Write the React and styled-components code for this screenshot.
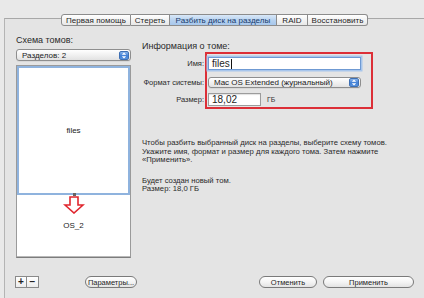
import React from "react";
import styled, { createGlobalStyle } from "styled-components";

const Global = createGlobalStyle`
  html, body { margin: 0; padding: 0; background: #e9e9e9; }
  body { font-family: "Liberation Sans", "DejaVu Sans", sans-serif; color: #2a2a2a; }
  * { box-sizing: border-box; }
`;

const Page = styled.div`
  width: 424px;
  height: 298px;
  overflow: hidden;
  padding: 18px 0 0 4px;
  background: #e9e9e9;
`;

const Group = styled.div`
  width: 420px;
  height: 280px;
  border-top: 1px solid #a8a8a8;
  border-left: 1px solid #b4b4b4;
  background: #e4e4e4;
  display: flex;
  flex-direction: column;
  padding-bottom: 10px;
`;

const TabBar = styled.div`
  display: flex;
  margin: -5px 0 0 56px;
  height: 12px;
`;

const Tab = styled.div`
  width: ${p => p.w}px;
  height: 12px;
  display: flex;
  align-items: center;
  justify-content: center;
  font-size: 8px;
  letter-spacing: 0.05px;
  color: ${p => (p.active ? "#173a6a" : "#1e1e1e")};
  background: ${p =>
    p.active
      ? "linear-gradient(#d9e8f8, #b6d1ef 55%, #a7c7ec)"
      : "linear-gradient(#ffffff, #f3f3f3 50%, #e7e7e7)"};
  border: 1px solid #8c8c8c;
  border-left-width: ${p => (p.first ? 1 : 0)}px;
  border-radius: ${p => (p.first ? "3px 0 0 3px" : p.last ? "0 3px 3px 0" : "0")};
  white-space: nowrap;
`;

const Body = styled.div`
  display: flex;
  align-items: flex-start;
  padding: 8px 0 0 11px;
`;

const LeftCol = styled.div`
  width: 115px;
  display: flex;
  flex-direction: column;
`;

const SectionLabel = styled.div`
  font-size: 9px;
  line-height: 12px;
  color: #2a2a2a;
`;

const Popup = styled.div`
  height: ${p => p.h || 12}px;
  width: ${p => (p.w ? `${p.w}px` : "100%")};
  margin-top: ${p => p.mt || 0}px;
  border: 1px solid #8e8e8e;
  border-radius: 3px;
  background: linear-gradient(#ffffff, #f1f1f1 50%, #e2e2e2);
  display: flex;
  align-items: center;
  justify-content: space-between;
  padding: 0 1px 0 5px;
  font-size: 8px;
  color: #222;
  box-shadow: 0 1px 0 rgba(0,0,0,0.05);
`;

const Stepper = styled.div`
  width: 10px;
  height: 9px;
  border-radius: 2px;
  background: linear-gradient(#8bb6ec, #3f7fd6 55%, #5b95e0);
  border: 1px solid #3e6fb3;
  display: flex;
  align-items: center;
  justify-content: center;
`;

const PartitionBox = styled.div`
  margin-top: 4px;
  height: 193px;
  border: 1px solid #9a9a9a;
  border-bottom-color: #7c7c7c;
  background: #fff;
  display: flex;
  flex-direction: column;
`;

const Partition = styled.div`
  position: relative;
  height: ${p => p.h}px;
  border: ${p => (p.selected ? "2px solid #8fb3de" : "0")};
  border-bottom: ${p => (p.selected ? "2px solid #8fb3de" : "1px solid #b9b9b9")};
  display: flex;
  align-items: center;
  justify-content: center;
  font-size: 8px;
  color: #222;
`;

const Handle = styled.div`
  position: absolute;
  left: 50%;
  bottom: -3px;
  width: 3px;
  height: 3px;
  margin-left: -1px;
  background: #666;
`;

const ArrowMark = styled.svg`
  position: absolute;
  left: 46px;
  top: 1px;
`;

const RightCol = styled.div`
  margin: 6px 0 0 11px;
  display: flex;
  flex-direction: column;
`;

const Form = styled.div`
  display: flex;
`;

const Labels = styled.div`
  width: 62px;
  margin-right: 1px;
  padding-top: 2px;
  display: flex;
  flex-direction: column;
`;

const Label = styled.div`
  height: ${p => p.h}px;
  display: flex;
  align-items: center;
  justify-content: flex-end;
  font-size: 7.5px;
  color: #2a2a2a;
  white-space: nowrap;
`;

const RedBox = styled.div`
  width: 168px;
  border: 2px solid #dc2f37;
  padding: 0 10px 0 1px;
  display: flex;
  flex-direction: column;
`;

const Row = styled.div`
  height: ${p => p.h}px;
  display: flex;
  align-items: center;
  gap: 6px;
`;

const TextField = styled.div`
  width: ${p => (p.w ? `${p.w}px` : "100%")};
  height: ${p => p.h}px;
  background: #fff;
  border: 1px solid ${p => (p.focus ? "#6f9ad3" : "#9c9c9c")};
  box-shadow: ${p => (p.focus ? "0 0 0 1.5px #a8c6ec" : "inset 0 1px 1px rgba(0,0,0,0.12)")};
  display: flex;
  align-items: center;
  padding-left: 3px;
  font-size: 10px;
  color: #1e1e1e;
`;

const Caret = styled.span`
  display: inline-block;
  width: 1px;
  height: 10px;
  background: #111;
  margin-left: 1px;
`;

const Unit = styled.span`
  font-size: 7px;
  color: #333;
`;

const Para = styled.div`
  margin-top: ${p => p.mt}px;
  font-size: 7.7px;
  line-height: 8.6px;
  color: #2a2a2a;
  width: 272px;
`;

const BottomRow = styled.div`
  margin-top: auto;
  display: flex;
  align-items: center;
  padding: 0 10px 0 10px;
`;

const SquareGroup = styled.div`
  display: flex;
`;

const SquareBtn = styled.div`
  width: 12px;
  height: 12px;
  border: 1px solid #8a8a8a;
  border-left-width: ${p => (p.first ? 1 : 0)}px;
  background: linear-gradient(#ffffff, #ececec);
  display: flex;
  align-items: center;
  justify-content: center;
  font-size: 10px;
  font-weight: bold;
  line-height: 1;
  color: #222;
`;

const PillBtn = styled.div`
  width: ${p => p.w}px;
  height: 12px;
  margin-left: ${p => p.ml || "0"};
  border: 1px solid #7a7a7a;
  border-radius: 7px;
  background: linear-gradient(#ffffff, #f4f4f4 50%, #e3e3e3);
  display: flex;
  align-items: center;
  justify-content: center;
  font-size: 7.5px;
  color: #1e1e1e;
  white-space: nowrap;
`;

const StepIcon = () => (
  <svg width="6" height="7" viewBox="0 0 6 7">
    <path d="M3 0.5 L5.2 2.8 H0.8 Z M3 6.5 L5.2 4.2 H0.8 Z" fill="#fff" />
  </svg>
);

export default function App() {
  return (
    <Page>
      <Global />
      <Group>
        <TabBar>
          <Tab w={70} first>Первая помощь</Tab>
          <Tab w={39}>Стереть</Tab>
          <Tab w={107} active>Разбить диск на разделы</Tab>
          <Tab w={31}>RAID</Tab>
          <Tab w={60} last>Восстановить</Tab>
        </TabBar>
        <Body>
          <LeftCol>
            <SectionLabel>Схема томов:</SectionLabel>
            <Popup mt={3}>
              <span>Разделов: 2</span>
              <Stepper><StepIcon /></Stepper>
            </Popup>
            <PartitionBox>
              <Partition h={129} selected>
                files
                <Handle />
              </Partition>
              <Partition h={62}>
                <ArrowMark width="22" height="18" viewBox="0 0 22 18">
                  <path
                    d="M7 1 H15 V9 H20 L11 17 L2 9 H7 Z"
                    fill="none"
                    stroke="#e0262e"
                    strokeWidth="1.6"
                    strokeLinejoin="miter"
                  />
                </ArrowMark>
                OS_2
              </Partition>
            </PartitionBox>
          </LeftCol>
          <RightCol>
            <SectionLabel>Информация о томе:</SectionLabel>
            <Form>
              <Labels>
                <Label h={19}>Имя:</Label>
                <Label h={19}>Формат системы:</Label>
                <Label h={15}>Размер:</Label>
              </Labels>
              <RedBox>
                <Row h={19}>
                  <TextField h={13} focus>
                    files<Caret />
                  </TextField>
                </Row>
                <Row h={19}>
                  <Popup h={11}>
                    <span>Mac OS Extended (журнальный)</span>
                    <Stepper><StepIcon /></Stepper>
                  </Popup>
                </Row>
                <Row h={15}>
                  <TextField h={13} w={53}>18,02</TextField>
                  <Unit>ГБ</Unit>
                </Row>
              </RedBox>
            </Form>
            <Para mt={30}>
              Чтобы разбить выбранный диск на разделы, выберите схему томов.
              Укажите имя, формат и размер для каждого тома. Затем нажмите
              «Применить».
            </Para>
            <Para mt={12}>
              Будет создан новый том.
              <br />
              Размер: 18,0 ГБ
            </Para>
          </RightCol>
        </Body>
        <BottomRow>
          <SquareGroup>
            <SquareBtn first>+</SquareBtn>
            <SquareBtn>−</SquareBtn>
          </SquareGroup>
          <PillBtn w={52} ml="46px">Параметры...</PillBtn>
          <PillBtn w={58} ml="auto">Отменить</PillBtn>
          <PillBtn w={91} ml="6px">Применить</PillBtn>
        </BottomRow>
      </Group>
    </Page>
  );
}
